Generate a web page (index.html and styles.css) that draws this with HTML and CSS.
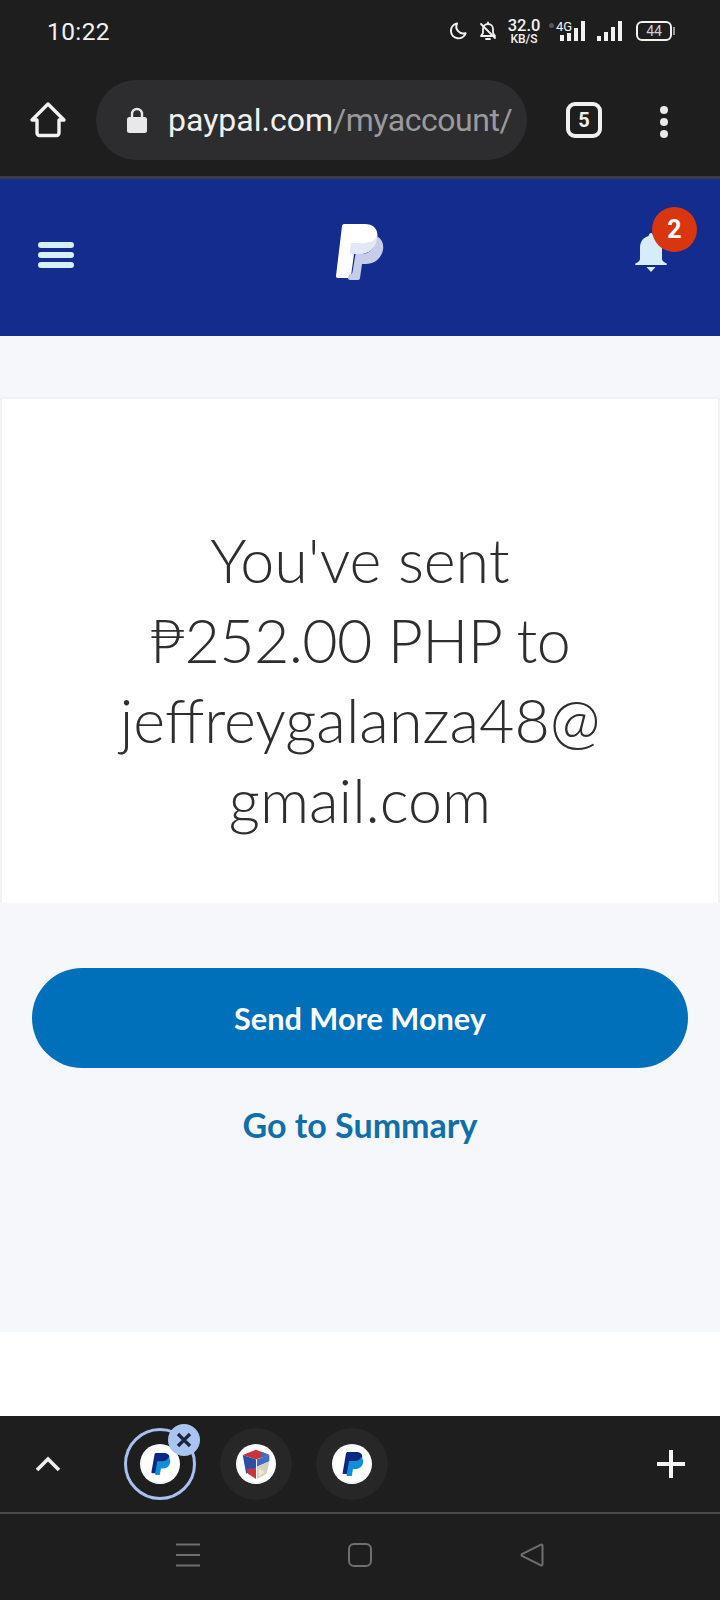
FILE: index.html
```html
<!DOCTYPE html>
<html lang="en">
<head>
    <meta charset="UTF-8">
    <meta name="viewport" content="width=device-width, initial-scale=1.0">
    <title>PayPal - You've sent</title>
    <link rel="stylesheet" href="styles.css">
</head>
<body>
    <div class="phone">
        <!-- Android status bar -->
        <div class="status">
            <span class="clock">10:22</span>
            <div class="status-icons">
                <svg class="ico-moon" width="20" height="20" viewBox="0 0 20 20"><path d="M9 2.500a7.500 7.500 0 1 0 8.600 9.600A7 7 0 0 1 9 2.500z" fill="none" stroke="#f2f2f2" stroke-width="2" stroke-linejoin="round"/></svg>
                <svg class="ico-mute" width="20" height="20" viewBox="0 0 20 20"><path d="M3 15h14l-2-3V8a5 5 0 0 0-10 0v4z" fill="none" stroke="#f2f2f2" stroke-width="1.800" stroke-linejoin="round"/><path d="M8 18h4M10 1.500v1.500M3 3l14 14" stroke="#f2f2f2" stroke-width="1.800" stroke-linecap="round"/></svg>
                <div class="speed"><span>32.0</span><span class="speed-unit">KB/S</span></div>
                <div class="net">
                    <i class="net-dot"></i>
                    <span class="net-label">4G</span>
                    <svg width="28" height="22" viewBox="0 0 28 22"><path d="M1 15h4v6H1zM8 13h4v8H8z" fill="#f2f2f2"/><path d="M15 8h4v13h-4zM22 1h4v20h-4z" fill="#f2f2f2"/></svg>
                </div>
                <svg class="signal" width="28" height="22" viewBox="0 0 28 22"><path d="M1 16h4v5H1zM8 12h4v9H8zM15 7h4v14h-4zM22 1h4v20h-4z" fill="#f2f2f2"/></svg>
                <div class="battery"><span>44</span></div>
            </div>
        </div>

        <!-- Browser toolbar -->
        <div class="toolbar">
            <svg class="ico-home" width="38" height="38" viewBox="0 0 38 38"><path d="M3 19 19 3l16 16h-5v13a2.500 2.500 0 0 1-2.500 2.500h-17A2.500 2.500 0 0 1 8 32V19z" fill="none" stroke="#f2f2f2" stroke-width="3.400" stroke-linejoin="round"/></svg>
            <div class="urlbar">
                <svg class="ico-lock" width="22" height="26" viewBox="0 0 22 26"><path d="M6 11V7a5 5 0 0 1 10 0v4" fill="none" stroke="#e8e8ea" stroke-width="2.400"/><rect x="1" y="10" width="20" height="16" rx="2.500" fill="#e8e8ea"/></svg>
                <div class="url"><span class="url-host">paypal.com</span>/myaccount/</div>
            </div>
            <div class="tab-count">5</div>
            <div class="more"><i></i><i></i><i></i></div>
        </div>

        <!-- PayPal header -->
        <header class="pp-header">
            <div class="burger"><i></i><i></i><i></i></div>
            <svg class="pp-logo" width="48" height="57" viewBox="0 0 48 57">
                <path d="M8 0h21c9 0 14 6 12 15-2 10-9 15-18 15h-5l-3 22c0 1-1 2-2 2H1.500C.5 54 0 53 0 52L6 2c.2-1 1-2 2-2z" fill="#fff"/>
                <path d="M41 12c5 3 7 8 6 14-2 9-9 14-17 14h-4l-2 14c0 1-1 2-2 2h-8c-1 0-2-1-2-2l1-4h1.500c1 0 2-1 2-2l3-18h5c10 0 15-6 17-18z" fill="#c6cde8"/>
                <path d="M15 19h11c7 0 13-2 15-7 1 8-5 18-18 18h-9.500z" fill="#e4e7f5"/>
            </svg>
            <div class="bell-wrap">
                <svg class="ico-bell" width="34" height="40" viewBox="0 0 34 40"><path d="M17 1c1.500 0 2 1.500 2.500 3C25 5.500 28 10 28 16v11c0 2 2 3 4.500 4.500.8.500.5 1.500-.5 1.500H2c-1 0-1.300-1-.5-1.500C4 30 6 29 6 27V16c0-6 3-10.500 8.500-12 .5-1.500 1-3 2.500-3z" fill="#d6ecf8"/><path d="M12.500 35h9L17 40z" fill="#d6ecf8"/></svg>
                <span class="badge">2</span>
            </div>
        </header>

        <!-- Confirmation -->
        <main class="content">
            <section class="card">
                <h1 class="sent-title">You've sent<br><span class="amount">₱252.00 PHP to</span><br>jeffreygalanza48@<br>gmail.com</h1>
            </section>
            <div class="actions">
                <a class="btn-primary" href="#">Send More Money</a>
                <a class="link" href="#">Go to Summary</a>
            </div>
        </main>
        <div class="page-foot"></div>

        <!-- Browser tab strip -->
        <div class="tabstrip">
            <svg class="ico-chevron" width="26" height="16" viewBox="0 0 26 16"><path d="M2 14 13 3l11 11" fill="none" stroke="#eeeeee" stroke-width="3.600"/></svg>
            <div class="tabs">
                <div class="tab tab-active">
                    <span class="favicon">
                        <svg width="22" height="24" viewBox="0 0 24 26"><use href="#pp-mark"/></svg>
                    </span>
                    <span class="tab-close">
                        <svg width="18" height="18" viewBox="0 0 18 18"><path d="M3 3l12 12M15 3 3 15" stroke="#1c2540" stroke-width="3.200"/></svg>
                    </span>
                </div>
                <div class="tab">
                    <span class="favicon">
                        <svg width="32" height="34" viewBox="0 0 36 38">
                            <path d="M18 3 33 9 18 14 3 9z" fill="#c9343b"/>
                            <path d="M24 5l9 4-8 3z" fill="#3b6fc4"/>
                            <path d="M3 9l15 5v10L7 30z" fill="#2a4fa3"/>
                            <path d="M7 24l11 0v12L9 30z" fill="#c9343b"/>
                            <path d="M33 9 19 14v8l14-6z" fill="#3b6fc4"/>
                            <path d="M19 22l14-6-3 14-11 6z" fill="#d8cfbc"/>
                            <path d="M21 24l7 4-7 5z" fill="#efe6d2"/>
                        </svg>
                    </span>
                </div>
                <div class="tab">
                    <span class="favicon">
                        <svg width="24" height="26" viewBox="0 0 24 26"><use href="#pp-mark"/></svg>
                    </span>
                </div>
            </div>
            <svg class="ico-plus" width="30" height="30" viewBox="0 0 30 30"><path d="M15 1v28M1 15h28" stroke="#f4f4f4" stroke-width="4"/></svg>
        </div>

        <!-- Android nav bar -->
        <nav class="navbar">
            <svg width="24" height="24" viewBox="0 0 24 24"><path d="M0 1.500h24M0 12h24M0 22.500h24" stroke="#6f6f6f" stroke-width="2"/></svg>
            <svg width="24" height="24" viewBox="0 0 24 24"><rect x="1" y="1" width="22" height="22" rx="5" fill="none" stroke="#6f6f6f" stroke-width="2"/></svg>
            <svg width="24" height="24" viewBox="0 0 24 24"><path d="M22.500 2.500v19a1 1 0 0 1-1.500.8L2 13a1.200 1.200 0 0 1 0-2L21 1.700a1 1 0 0 1 1.500.8z" fill="none" stroke="#6f6f6f" stroke-width="2"/></svg>
        </nav>
    </div>

    <!-- shared PayPal mark for the favicons -->
    <svg class="defs" width="0" height="0">
        <symbol id="pp-mark" viewBox="0 0 24 26">
            <path d="M8 1h8c5 0 7 2.500 6 7-1 5-5 7-9 7h-3l-1 7c0 .6-.5 1-1 1H3.500c-.6 0-1-.5-.9-1L6 2.500C6.100 1.600 7 1 8 1z" fill="#0a2a82"/>
            <path d="M21 6c2 1.500 2.500 3.500 2 6-1 4-4 6-8 6h-2l-1 6c0 .6-.5 1-1 1H7.500c-.6 0-1-.5-.9-1L9 10h5c4 0 6.500-1.500 7-4z" fill="#0f8fd8"/>
        </symbol>
    </svg>
</body>
</html>
```

FILE: styles.css
```css
/* Global reset */
* {
    margin: 0;
    padding: 0;
    box-sizing: border-box;
}

body {
    width: 720px;
    height: 1600px;
    overflow: hidden;
    font-family: 'Roboto', sans-serif;
    background: #fff;
}

.phone {
    display: flex;
    flex-direction: column;
    height: 1600px;
}

svg {
    display: block;
    flex: none;
}

.defs {
    position: absolute;
}

/* Status bar */
.status {
    height: 62px;
    background: #1e1e1e;
    display: flex;
    justify-content: space-between;
    align-items: center;
    padding: 0 48px 0 47px;
    color: #f2f2f2;
}

.clock {
    font-size: 24.5px;
    letter-spacing: 0.4px;
}

.status-icons {
    display: flex;
    align-items: center;
}

.ico-moon {
    margin-right: 10px;
}

.ico-mute {
    margin-right: 9px;
}

.speed {
    display: flex;
    flex-direction: column;
    align-items: center;
    width: 34px;
    font-size: 16.5px;
    line-height: 16px;
    font-weight: 500;
}

.speed-unit {
    font-size: 12px;
    line-height: 11px;
}

.net {
    display: flex;
    align-items: center;
    margin-left: 18px;
    position: relative;
}

.net-dot {
    position: absolute;
    left: -10px;
    top: 3px;
    width: 5px;
    height: 5px;
    border-radius: 50%;
    background: #555;
}

.net-label {
    position: absolute;
    left: -3px;
    top: 0;
    font-size: 13px;
    line-height: 13px;
}

.signal {
    margin-left: 9px;
}

.battery {
    width: 36px;
    height: 20px;
    margin-left: 12px;
    border: 2px solid #f2f2f2;
    border-radius: 6px;
    display: flex;
    align-items: center;
    justify-content: center;
    font-size: 14px;
    color: #cfcfcf;
    position: relative;
}

.battery::after {
    content: "";
    position: absolute;
    right: -5px;
    top: 4px;
    width: 2px;
    height: 8px;
    background: #9a9a9a;
}

/* Browser toolbar */
.toolbar {
    height: 114px;
    background: #1e1e1e;
    display: flex;
    align-items: flex-start;
    padding: 18px 0 0 29px;
}

.ico-home {
    margin-top: 21px;
}

.urlbar {
    width: 431px;
    height: 80px;
    margin-left: 29px;
    padding: 0 10px 0 30px;
    background: #2d2d30;
    border-radius: 40px;
    display: flex;
    align-items: center;
    overflow: hidden;
}

.ico-lock {
    margin-right: 20px;
}

.url {
    font-size: 32px;
    letter-spacing: -0.45px;
    color: #9a9a9c;
    white-space: nowrap;
}

.url-host {
    color: #f0f0f0;
    letter-spacing: 0;
}

.tab-count {
    width: 36px;
    height: 36px;
    margin: 22px 0 0 39px;
    border: 4px solid #f0f0f0;
    border-radius: 9px;
    color: #f0f0f0;
    font-size: 20px;
    font-weight: 700;
    display: flex;
    align-items: center;
    justify-content: center;
}

.more {
    display: flex;
    flex-direction: column;
    gap: 4px;
    margin: 26px 0 0 58px;
}

.more i {
    width: 8px;
    height: 8px;
    border-radius: 50%;
    background: #e8e8e8;
}

/* PayPal header */
.pp-header {
    height: 160px;
    background: #142c8e;
    border-top: 3px solid #3a3d46;
    display: flex;
    justify-content: space-between;
    align-items: flex-start;
    padding: 48px 36px 0 38px;
}

.burger {
    display: flex;
    flex-direction: column;
    gap: 4px;
    margin-top: 15px;
}

.burger i {
    width: 36px;
    height: 6px;
    border-radius: 3px;
    background: #d6f0fb;
}

.pp-logo {
    margin-top: -3px;
    margin-left: 8px;
}

.bell-wrap {
    position: relative;
    width: 46px;
    height: 46px;
    margin-top: 5px;
}

.ico-bell {
    margin-left: -4px;
}

.badge {
    position: absolute;
    left: 14px;
    top: -25px;
    width: 45px;
    height: 45px;
    border-radius: 50%;
    background: #d9360f;
    color: #fff;
    font-size: 25px;
    font-weight: 700;
    display: flex;
    align-items: center;
    justify-content: center;
}

/* Confirmation area */
.content {
    height: 996px;
    background: #f5f7fa;
    padding-top: 61px;
}

.card {
    height: 506px;
    background: #fff;
    border: 2px solid #f0f2f4;
    border-bottom: 0;
    padding-top: 121px;
    text-align: center;
}

.sent-title {
    font-family: 'Lato', sans-serif;
    font-weight: 300;
    font-size: 61px;
    line-height: 80px;
    color: #2c2e2f;
}

.amount {
    letter-spacing: -0.65px;
}

.actions {
    display: flex;
    flex-direction: column;
    align-items: center;
    padding: 65px 32px 0;
}

.btn-primary {
    width: 100%;
    height: 100px;
    border-radius: 50px;
    background: #0070ba;
    color: #fff;
    font-family: 'Lato', sans-serif;
    font-size: 30.7px;
    font-weight: 700;
    text-decoration: none;
    display: flex;
    align-items: center;
    justify-content: center;
}

.link {
    margin-top: 36px;
    color: #0f6fa8;
    font-family: 'Lato', sans-serif;
    font-size: 34px;
    font-weight: 700;
    text-decoration: none;
}

.page-foot {
    flex: 1;
    background: #fff;
}

/* Tab strip */
.tabstrip {
    height: 96px;
    background: #1e1e1e;
    display: flex;
    align-items: center;
    padding: 0 34px 0 35px;
    flex: none;
}

.tabs {
    flex: 1;
    display: flex;
    gap: 24px;
    margin-left: 63px;
}

.tab {
    position: relative;
    width: 72px;
    height: 72px;
    border-radius: 50%;
    background: #272727;
    display: flex;
    align-items: center;
    justify-content: center;
}

.tab-active {
    background: none;
    border: 3px solid #a8c0ef;
}

.favicon {
    width: 40px;
    height: 40px;
    border-radius: 50%;
    background: #fff;
    overflow: hidden;
    display: flex;
    align-items: center;
    justify-content: center;
}

.tab-close {
    position: absolute;
    right: -7px;
    top: -7px;
    width: 32px;
    height: 32px;
    border-radius: 50%;
    background: #a9c4ee;
    display: flex;
    align-items: center;
    justify-content: center;
}

/* Nav bar */
.navbar {
    height: 88px;
    flex: none;
    background: #1e1e1e;
    border-top: 2px solid #4a4a4a;
    display: flex;
    align-items: center;
    padding: 0 176px 4px;
    justify-content: space-between;
}
```
